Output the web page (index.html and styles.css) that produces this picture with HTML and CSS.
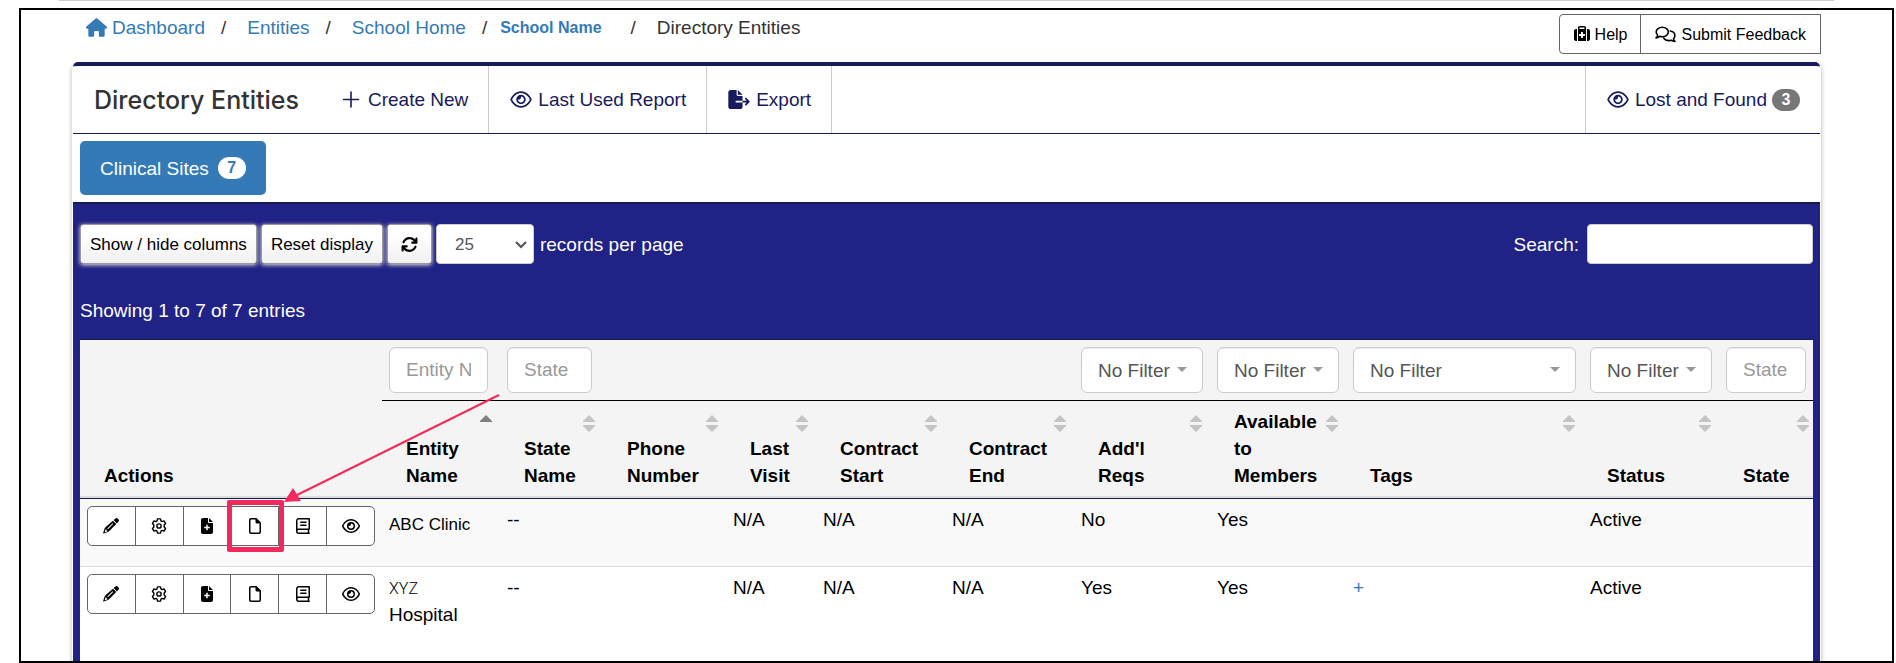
FILE: index.html
```html
<!DOCTYPE html>
<html lang="en">
<head>
<meta charset="utf-8">
<title>Directory Entities</title>
<link rel="stylesheet" href="styles.css">
</head>
<body>
<svg class="sprite" aria-hidden="true">
  <symbol id="i-home" viewBox="0 0 576 512"><path d="M575.8 255.5c0 18-15 32.1-32 32.1h-32l.7 160.2c0 2.7-.2 5.4-.5 8.1V472c0 22.1-17.9 40-40 40H456c-1.100 0-2.200 0-3.300-.1c-1.400 .1-2.800 .1-4.200 .1H416 392c-22.100 0-40-17.900-40-40V448 384c0-17.700-14.300-32-32-32H256c-17.700 0-32 14.300-32 32v64 24c0 22.100-17.900 40-40 40H160 128.100c-1.500 0-3-.1-4.500-.2c-1.200 .1-2.400 .2-3.600 .2H104c-22.100 0-40-17.900-40-40V360c0-.9 0-1.900 .1-2.800V287.600H32c-18 0-32-14-32-32.100c0-9 3-17 10-24L266.400 8c7-7 15-8 22-8s15 2 21 7L564.800 231.500c8 7 12 15 11 24z"/></symbol>
  <symbol id="i-eye" viewBox="0 0 576 512"><path d="M288 80c-65.200 0-118.800 29.600-159.900 67.700C89.600 183.500 63 226 49.400 256c13.600 30 40.200 72.500 78.600 108.300C169.200 402.400 222.800 432 288 432s118.800-29.600 159.900-67.700C486.400 328.500 513 286 526.600 256c-13.600-30-40.200-72.500-78.600-108.300C406.800 109.600 353.200 80 288 80zM95.400 112.600C142.500 68.800 207.200 32 288 32s145.500 36.800 192.600 80.600c46.800 43.500 78.100 95.400 93 131.100c3.300 7.900 3.300 16.700 0 24.600c-14.900 35.700-46.200 87.700-93 131.100C433.500 443.200 368.800 480 288 480s-145.500-36.800-192.600-80.600C48.600 356 17.300 304 2.500 268.300c-3.300-7.900-3.300-16.700 0-24.600C17.300 208 48.600 156 95.400 112.600zM288 336c44.200 0 80-35.800 80-80s-35.800-80-80-80c-.7 0-1.300 0-2 0c1.300 5.100 2 10.500 2 16c0 35.300-28.700 64-64 64c-5.500 0-10.900-.7-16-2c0 .7 0 1.300 0 2c0 44.200 35.800 80 80 80zm0-208a128 128 0 1 1 0 256 128 128 0 1 1 0-256z"/></symbol>
  <symbol id="i-plus" viewBox="0 0 16 16"><path d="M8 1v14M1 8h14" fill="none" stroke="currentColor" stroke-width="1.500" stroke-linecap="round"/></symbol>
  <symbol id="i-export" viewBox="0 0 576 512"><path d="M0 64C0 28.700 28.700 0 64 0H224V128c0 17.700 14.300 32 32 32H384V288H216c-13.300 0-24 10.700-24 24s10.700 24 24 24H384V448c0 35.300-28.700 64-64 64H64c-35.300 0-64-28.700-64-64V64zM384 336V288H494.100l-39-39c-9.400-9.400-9.400-24.600 0-33.900s24.600-9.400 33.900 0l80 80c9.400 9.400 9.400 24.600 0 33.900l-80 80c-9.400 9.400-24.600 9.400-33.900 0s-9.400-24.600 0-33.900l39-39H384zm0-208H256V0L384 128z"/></symbol>
  <symbol id="i-medkit" viewBox="0 0 512 512"><path fill-rule="evenodd" d="M184 48H328c4.400 0 8 3.600 8 8V96H176V56c0-4.400 3.600-8 8-8zm-56 8V480H384V56c0-30.900-25.100-56-56-56H184c-30.900 0-56 25.100-56 56zM96 96H64C28.700 96 0 124.700 0 160V416c0 35.300 28.700 64 64 64H96V96zM416 480h32c35.300 0 64-28.700 64-64V160c0-35.300-28.700-64-64-64H416V480zM224 208c0-8.800 7.200-16 16-16h32c8.800 0 16 7.200 16 16v48h48c8.800 0 16 7.200 16 16v32c0 8.800-7.200 16-16 16H288v48c0 8.800-7.200 16-16 16H240c-8.800 0-16-7.200-16-16V320H176c-8.800 0-16-7.200-16-16V272c0-8.800 7.200-16 16-16h48V208z"/></symbol>
  <symbol id="i-comments" viewBox="0 0 21 17"><g fill="none" stroke="currentColor" stroke-width="1.600" stroke-linejoin="round" stroke-linecap="round"><path d="M1 12c1.300-1 1.800-2 1.500-3.200C1.600 7.900 1.200 6.900 1.200 6 1.200 3.300 4 1.200 7.300 1.200s6 2.100 6 4.800-2.700 4.800-6 4.800c-1 0-1.900-.2-2.700-.5C3.500 11.300 2.300 11.900 1 12z"/><path d="M15.300 5c2.700.5 4.600 2.300 4.600 4.600 0 1.100-.4 2.100-1.200 2.900-.2 1.200.3 2.200 1.300 3-1.500 0-2.700-.5-3.700-1.300-.8.300-1.600.4-2.400.4-2.200 0-4.200-1-5.200-2.500"/></g></symbol>
  <symbol id="i-refresh" viewBox="0 0 512 512"><path d="M105 203c23-65 83-107 151-107 46 0 88 19 119 51l21 21h-56c-18 0-32 14-32 32s14 32 32 32h124c18 0 32-14 32-32V76c0-18-14-32-32-32s-32 14-32 32v34l-12-10C376 56 318 32 256 32 161 32 77 91 45 181c-6 17 3 35 19 41s35-3 41-19zM16 312v124c0 18 14 32 32 32s32-14 32-32v-34l12 10c44 44 102 68 164 68 95 0 179-59 211-149 6-17-3-35-19-41s-35 3-41 19c-23 65-83 107-151 107-46 0-88-19-119-51l-21-21h56c18 0 32-14 32-32s-14-32-32-32H48c-18 0-32 14-32 32z"/></symbol>
  <symbol id="i-pencil" viewBox="0 0 512 512"><path fill-rule="evenodd" d="M410 10c22-13 42-6 54 6l32 32c20 20 20 44 4 62l-56 62L340 66zM318 88l106 106-230 228c-10 10-24 18-40 22L18 494c-8 2-16-6-14-14l44-140c4-12 12-24 22-34zM78 368l-24 86 86-24v-34H110v-28zM306 168 138 336l20 20 168-168z"/></symbol>
  <symbol id="i-gear" viewBox="0 0 18 18"><g fill="none" stroke="currentColor" stroke-width="1.600" stroke-linejoin="round"><path d="M7.300 1h3.400l.5 2.200 1.300.8 2.200-.7 1.700 3L14.800 7.900v2.200l1.600 1.600-1.700 3-2.200-.7-1.300.8-.5 2.200H7.300l-.5-2.200L5.500 14l-2.200.7-1.700-3 1.600-1.600V7.900L1.600 6.300l1.700-3 2.200.7 1.300-.8z"/><circle cx="9" cy="9" r="2.400"/></g></symbol>
  <symbol id="i-file-plus" viewBox="0 0 384 512"><path fill-rule="evenodd" d="M64 0C29 0 0 29 0 64v384c0 35 29 64 64 64h256c35 0 64-29 64-64V160H256c-18 0-32-14-32-32V0zM256 0v128h128zM168 216h48v64h64v48h-64v64h-48v-64h-64v-48h64z"/></symbol>
  <symbol id="i-file" viewBox="0 0 384 512"><path fill-rule="evenodd" d="M64 0h176l144 144v304c0 35-29 64-64 64H64c-35 0-64-29-64-64V64C0 29 29 0 64 0zm0 48c-9 0-16 7-16 16v384c0 9 7 16 16 16h256c9 0 16-7 16-16V176H256c-28 0-48-18-48-48V48z"/></symbol>
  <symbol id="i-book" viewBox="0 0 448 512"><path fill-rule="evenodd" d="M88 0h320c22 0 40 18 40 40v304c0 16-10 30-24 36v84c14 0 24 10 24 24s-10 24-24 24H80c-44 0-80-36-80-80V88C0 40 40 0 88 0zM80 384c-18 0-32 14-32 40s14 40 32 40h296v-80zM48 344c10-5 21-8 32-8h320V48H88c-22 0-40 18-40 40zM136 112h200v48H136zM136 208h200v48H136z"/></symbol>
  <symbol id="i-chevron" viewBox="0 0 14 9"><path d="M2 2l5 5 5-5" fill="none" stroke="currentColor" stroke-width="2.200"/></symbol>
  <symbol id="i-caret" viewBox="0 0 10 5"><path d="M0 0h10L5 5z"/></symbol>
  <symbol id="i-up" viewBox="0 0 12 17"><path d="M6 0l6 6v1H0V6z"/></symbol>
  <symbol id="i-sort" viewBox="0 0 12 17"><path d="M6 0l6 6v1H0V6zM0 10h12v1l-6 6-6-6z"/></symbol>
</svg>

<div class="top-rule"></div>
<div class="frame">
  <header class="topbar">
    <nav aria-label="Breadcrumb">
      <ol class="breadcrumb">
        <li><a href="#"><svg class="icon-home"><use href="#i-home"/></svg>Dashboard</a></li>
        <li><a href="#">Entities</a></li>
        <li><a href="#">School Home</a></li>
        <li class="school"><a href="#">School Name</a></li>
        <li>Directory Entities</li>
      </ol>
    </nav>
    <div class="help-group">
      <button type="button"><svg class="icon-help"><use href="#i-medkit"/></svg>Help</button>
      <button type="button"><svg class="icon-feedback"><use href="#i-comments"/></svg>Submit Feedback</button>
    </div>
  </header>

  <main class="panel">
    <div class="toolbar">
      <h1>Directory Entities</h1>
      <a href="#"><svg class="tool-icon tool-icon-plus"><use href="#i-plus"/></svg>Create New</a>
      <a href="#"><svg class="tool-icon"><use href="#i-eye"/></svg>Last Used Report</a>
      <a href="#"><svg class="tool-icon"><use href="#i-export"/></svg>Export</a>
      <a href="#" class="lost"><svg class="tool-icon"><use href="#i-eye"/></svg>Lost and Found<span class="badge">3</span></a>
    </div>
    <div class="tabs">
      <button type="button" class="tab">Clinical Sites<span class="badge badge-light">7</span></button>
    </div>

    <section class="grid-area">
      <div class="controls">
        <button type="button" class="control">Show / hide columns</button>
        <button type="button" class="control">Reset display</button>
        <button type="button" class="control control-refresh" aria-label="Refresh"><svg class="icon-refresh"><use href="#i-refresh"/></svg></button>
        <label class="page-size">
          <span class="select-box"><select><option>25</option></select><svg class="chevron"><use href="#i-chevron"/></svg></span>
          records per page
        </label>
        <label class="search">Search: <input type="search"></label>
      </div>
      <p class="summary">Showing 1 to 7 of 7 entries</p>

      <table class="entities">
        <colgroup>
          <col class="w-actions"><col class="w-name"><col class="w-state-name"><col class="w-phone"><col class="w-visit"><col class="w-contract"><col class="w-contract"><col class="w-filter"><col class="w-filter"><col><col class="w-filter"><col class="w-state">
        </colgroup>
        <thead>
          <tr class="filters">
            <th rowspan="2" class="actions-head">Actions</th>
            <td><input class="medium" type="text" placeholder="Entity Name" aria-label="Entity Name"></td>
            <td><input class="short" type="text" placeholder="State" aria-label="State Name"></td>
            <td></td><td></td><td></td><td></td>
            <td><span class="select-box"><select aria-label="Additional requirements"><option>No Filter</option></select><svg class="caret"><use href="#i-caret"/></svg></span></td>
            <td><span class="select-box"><select aria-label="Available to members"><option>No Filter</option></select><svg class="caret"><use href="#i-caret"/></svg></span></td>
            <td><span class="select-box"><select aria-label="Tags"><option>No Filter</option></select><svg class="caret"><use href="#i-caret"/></svg></span></td>
            <td><span class="select-box"><select aria-label="Status"><option>No Filter</option></select><svg class="caret"><use href="#i-caret"/></svg></span></td>
            <td><input type="text" placeholder="State" aria-label="State"></td>
          </tr>
          <tr class="titles">
            <th>Entity<br>Name<svg class="sort sorted"><use href="#i-up"/></svg></th>
            <th>State<br>Name<svg class="sort"><use href="#i-sort"/></svg></th>
            <th>Phone<br>Number<svg class="sort"><use href="#i-sort"/></svg></th>
            <th>Last<br>Visit<svg class="sort"><use href="#i-sort"/></svg></th>
            <th>Contract<br>Start<svg class="sort"><use href="#i-sort"/></svg></th>
            <th>Contract<br>End<svg class="sort"><use href="#i-sort"/></svg></th>
            <th>Add'l<br>Reqs<svg class="sort"><use href="#i-sort"/></svg></th>
            <th>Available<br>to<br>Members<svg class="sort"><use href="#i-sort"/></svg></th>
            <th>Tags<svg class="sort"><use href="#i-sort"/></svg></th>
            <th>Status<svg class="sort"><use href="#i-sort"/></svg></th>
            <th>State<svg class="sort"><use href="#i-sort"/></svg></th>
          </tr>
        </thead>
        <tbody>
          <tr>
            <td>
              <div class="row-actions">
                <button type="button" aria-label="Edit"><svg class="action-icon"><use href="#i-pencil"/></svg></button>
                <button type="button" aria-label="Settings"><svg class="action-icon"><use href="#i-gear"/></svg></button>
                <button type="button" aria-label="Add file"><svg class="action-icon"><use href="#i-file-plus"/></svg></button>
                <button type="button" aria-label="File"><svg class="action-icon"><use href="#i-file"/></svg><span class="highlight"></span><svg class="pointer" viewBox="0 0 220 110"><path d="M217 2 13 103" fill="none" stroke="currentColor" stroke-width="2"/><path d="M2 109 11 95l8 13z"/></svg></button>
                <button type="button" aria-label="Log"><svg class="action-icon"><use href="#i-book"/></svg></button>
                <button type="button" aria-label="View"><svg class="action-icon wide"><use href="#i-eye"/></svg></button>
              </div>
            </td>
            <td><span class="clinic">ABC Clinic</span></td>
            <td>--</td><td></td><td>N/A</td><td>N/A</td><td>N/A</td><td>No</td><td>Yes</td><td></td><td>Active</td><td></td>
          </tr>
          <tr>
            <td>
              <div class="row-actions">
                <button type="button" aria-label="Edit"><svg class="action-icon"><use href="#i-pencil"/></svg></button>
                <button type="button" aria-label="Settings"><svg class="action-icon"><use href="#i-gear"/></svg></button>
                <button type="button" aria-label="Add file"><svg class="action-icon"><use href="#i-file-plus"/></svg></button>
                <button type="button" aria-label="File"><svg class="action-icon"><use href="#i-file"/></svg></button>
                <button type="button" aria-label="Log"><svg class="action-icon"><use href="#i-book"/></svg></button>
                <button type="button" aria-label="View"><svg class="action-icon wide"><use href="#i-eye"/></svg></button>
              </div>
            </td>
            <td><span class="xyz">XYZ</span><br>Hospital</td>
            <td>--</td><td></td><td>N/A</td><td>N/A</td><td>N/A</td><td>Yes</td><td>Yes</td><td><a href="#" class="more">+</a></td><td>Active</td><td></td>
          </tr>
        </tbody>
      </table>
    </section>
  </main>
</div>
</body>
</html>
```
FILE: styles.css
```css
* { box-sizing: border-box; }

body {
  margin: 0;
  height: 100vh;
  overflow: hidden;
  display: flex;
  flex-direction: column;
  background: #fff;
  color: #000;
  font: 19px/27px "Liberation Sans", Arial, sans-serif;
}

a { color: #337ab7; text-decoration: none; }
button, input, select { font: inherit; color: inherit; margin: 0; }
svg { fill: currentColor; display: block; flex: none; }
.sprite { position: absolute; width: 0; height: 0; }

.top-rule { flex: none; height: 1px; margin: 0 62px 7px 59px; background: #ccc; }

.frame {
  flex: 1;
  min-height: 0;
  margin: 0 2px 0 19px;
  padding: 0 71px 0 51px;
  border: 2px solid #000;
  overflow: hidden;
  display: flex;
  flex-direction: column;
}

/* Breadcrumb and help buttons */
.topbar {
  flex: none;
  display: flex;
  justify-content: space-between;
  align-items: flex-start;
  padding: 4px 0 8px 14px;
}
.breadcrumb { display: flex; list-style: none; margin: 0; padding: 0; color: #333; }
.breadcrumb li { display: flex; }
.breadcrumb a { display: flex; align-items: center; gap: 5px; }
.breadcrumb li + li::before { content: "/"; margin: 0 21px 0 16px; }
.breadcrumb .school::before { margin-right: 13px; }
.breadcrumb .school { padding-right: 13px; }
.school a { font-size: 16px; font-weight: bold; }
.icon-home { width: 21px; height: 19px; }

.help-group { display: flex; }
.help-group button {
  display: flex;
  align-items: center;
  gap: 5px;
  height: 40px;
  padding: 0 13px 0 14px;
  border: 1px solid #666;
  border-radius: 4px 0 0 4px;
  background: #fff;
  font-size: 16px;
}
.help-group button + button { margin-left: -1px; border-radius: 0; padding-right: 14px; }
.icon-help { width: 16px; height: 16px; }
.icon-feedback { width: 21px; height: 17px; }

/* Panel */
.panel {
  flex: 1;
  min-height: 0;
  display: flex;
  flex-direction: column;
  border: 1px solid #fff;
  border-width: 0 1px;
  border-radius: 5px 5px 0 0;
  box-shadow: 0 4px 5px rgba(0, 0, 0, .3);
}
.toolbar {
  flex: none;
  display: flex;
  height: 72px;
  border-top: 4px solid #171a5c;
  border-bottom: 1px solid #171a5c;
  border-radius: 5px 5px 0 0;
}
.toolbar h1 {
  margin: 0;
  padding: 0 20px 0 21px;
  align-self: center;
  color: #333;
  font: 500 25px/30px Inter, "Liberation Sans", sans-serif;
}
.toolbar a {
  display: flex;
  align-items: center;
  gap: 5px;
  padding: 0 20px;
  border-right: 1px solid #ccc;
  color: #171a5c;
}
.toolbar .lost { margin-left: auto; border-right: 0; border-left: 1px solid #ccc; }
.tool-icon { width: 24px; height: 19px; }
.tool-icon-plus { height: 17px; }

.badge {
  min-width: 28px;
  padding: 0 9px;
  border-radius: 11px;
  background: #777;
  color: #fff;
  font-size: 16px;
  font-weight: bold;
  line-height: 22px;
  text-align: center;
}
.badge-light { background: #fff; color: #337ab7; }

.tabs { flex: none; padding: 7px; }
.tab {
  display: flex;
  align-items: center;
  gap: 9px;
  height: 54px;
  padding: 0 20px;
  border: 0;
  border-radius: 5px;
  background: #337ab7;
  color: #fff;
}

.grid-area {
  flex: 1;
  min-height: 0;
  padding: 20px 7px 0;
  border-top: 2px solid #171a4c;
  background: #202286;
}
.controls { display: flex; gap: 4px; color: #fff; }
.control {
  height: 40px;
  padding: 0 9px;
  border: 1px solid #999;
  border-radius: 3px;
  background: linear-gradient(#fff 30%, #f0f0f0);
  box-shadow: 0 1px 4px #e8e8d8;
  color: #000;
  font-size: 17px;
}
.control-refresh { width: 45px; display: grid; place-items: center; padding: 0; }
.icon-refresh { width: 17px; height: 17px; }

.select-box { position: relative; display: block; }
.select-box select { appearance: none; width: 100%; background: #fff; color: #555; }
.chevron { position: absolute; right: 6px; top: 16px; width: 14px; height: 9px; color: #555; pointer-events: none; }
.caret { position: absolute; right: 16px; top: 20px; width: 10px; height: 5px; color: #999; pointer-events: none; }

.page-size { display: flex; align-items: center; gap: 6px; }
.page-size .select-box { width: 98px; }
.page-size select { height: 40px; padding: 0 18px; border: 1px solid #ccc; border-radius: 4px; font-size: 17px; }
.search { display: flex; align-items: center; gap: 8px; margin-left: auto; }
.search input { width: 226px; height: 40px; padding: 0 12px; border: 1px solid #ccc; border-radius: 4px; background: #fff; color: #333; }
.summary { margin: 33px 0 15px; color: #fff; }

/* Entity table */
.entities { width: 100%; table-layout: fixed; border-collapse: separate; border-spacing: 0; background: #fff; }
.w-actions { width: 302px; }
.w-name { width: 118px; }
.w-state-name { width: 103px; }
.w-phone { width: 123px; }
.w-visit { width: 90px; }
.w-contract { width: 129px; }
.w-filter { width: 136px; }
.w-state { width: 94px; }

.entities th, .entities td { padding: 7px; text-align: left; vertical-align: top; }
.entities thead { background: #f4f4f4; }
.entities thead tr:first-child > * { border-top: 1px solid #171a4c; }
.entities .filters td { border-bottom: 1px solid #000; }
.filters input, .filters select {
  display: block;
  width: 100%;
  height: 46px;
  padding: 0 16px;
  border: 1px solid #ccc;
  border-radius: 6px;
  background: #fff;
  box-shadow: inset 0 1px 1px rgba(0, 0, 0, .08);
}
.filters .medium { width: 99px; }
.filters .short { width: 85px; }
.filters ::placeholder { color: #999; opacity: 1; }

.entities .titles th, .entities .actions-head {
  position: relative;
  padding-left: 24px;
  vertical-align: bottom;
  border-bottom: 2px solid #ddd;
}
.sort { position: absolute; top: 14px; right: 8px; width: 12px; height: 17px; color: #c4c4c4; }
.titles th:last-child .sort { right: 4px; }
.sorted { color: #808080; }

.entities tbody tr:first-child td { height: 68px; border-top: 1px solid #171a4c; background: #f9f9f9; }
.entities tbody tr + tr td { height: 96px; border-top: 1px solid #ddd; }

.row-actions { display: flex; }
.row-actions button {
  position: relative;
  display: grid;
  place-items: center;
  width: 49px;
  height: 40px;
  padding: 0;
  border: 1px solid #666;
  background: #fff;
}
.row-actions button + button { margin-left: -1px; }
.row-actions button:first-child { border-radius: 5px 0 0 5px; }
.row-actions button:last-child { border-radius: 0 5px 5px 0; }
.action-icon { width: 16px; height: 16px; }
.action-icon.wide { width: 18px; }
.clinic { display: block; padding-top: 5px; font-size: 17px; }
.xyz { font: 300 16px/20px Roboto, "Liberation Sans", sans-serif; }

.highlight {
  position: absolute;
  z-index: 2;
  left: -4px;
  top: -7px;
  width: 57px;
  height: 52px;
  border: 5px solid #f2295f;
  border-radius: 2px;
}
.pointer {
  position: absolute;
  z-index: 2;
  left: 51px;
  top: -114px;
  width: 220px;
  height: 110px;
  color: #f2295f;
  pointer-events: none;
}
```
